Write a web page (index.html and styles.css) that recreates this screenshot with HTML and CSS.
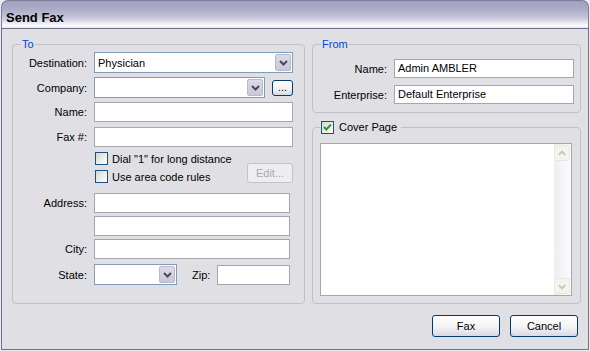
FILE: index.html
```html
<!DOCTYPE html>
<html lang="en">
<head>
    <meta charset="UTF-8">
    <title>Send Fax</title>
    <link rel="stylesheet" href="styles.css">
</head>
<body>
    <div class="window">
        <div class="titlebar">Send Fax</div>
        <div class="client">
            <div class="columns">
                <fieldset class="group group-to">
                    <legend>To</legend>
                    <div class="row row-dest">
                        <span class="label">Destination:</span>
                        <div class="combo combo-dest">
                            <span class="combo-text">Physician</span>
                            <span class="drop"><svg width="9" height="6" viewBox="0 0 9 6"><polyline points="1,1 4.5,4.5 8,1" fill="none" stroke="#4a4a58" stroke-width="2"/></svg></span>
                        </div>
                    </div>
                    <div class="row row-company">
                        <span class="label">Company:</span>
                        <div class="combo combo-company">
                            <span class="combo-text"></span>
                            <span class="drop"><svg width="9" height="6" viewBox="0 0 9 6"><polyline points="1,1 4.5,4.5 8,1" fill="none" stroke="#4a4a58" stroke-width="2"/></svg></span>
                        </div>
                        <span class="btn btn-dots">...</span>
                    </div>
                    <div class="row row-name">
                        <span class="label">Name:</span>
                        <div class="field field-full"></div>
                    </div>
                    <div class="row row-fax">
                        <span class="label">Fax #:</span>
                        <div class="field field-full"></div>
                    </div>
                    <div class="row row-checks">
                        <span class="label"></span>
                        <div class="checks">
                            <div class="check-line"><span class="checkbox"></span>Dial "1" for long distance</div>
                            <div class="check-line"><span class="checkbox"></span>Use area code rules</div>
                        </div>
                        <span class="btn btn-edit">Edit...</span>
                    </div>
                    <div class="row row-address">
                        <span class="label">Address:</span>
                        <div class="field field-addr"></div>
                    </div>
                    <div class="row row-address2">
                        <span class="label"></span>
                        <div class="field field-addr"></div>
                    </div>
                    <div class="row row-city">
                        <span class="label">City:</span>
                        <div class="field field-addr"></div>
                    </div>
                    <div class="row row-state">
                        <span class="label">State:</span>
                        <div class="combo combo-state">
                            <span class="combo-text"></span>
                            <span class="drop"><svg width="9" height="6" viewBox="0 0 9 6"><polyline points="1,1 4.5,4.5 8,1" fill="none" stroke="#4a4a58" stroke-width="2"/></svg></span>
                        </div>
                        <span class="zip-label">Zip:</span>
                        <div class="field field-zip"></div>
                    </div>
                </fieldset>

                <div class="side">
                    <fieldset class="group group-from">
                        <legend>From</legend>
                        <div class="row row-from-name">
                            <span class="label">Name:</span>
                            <div class="field field-from">Admin AMBLER</div>
                        </div>
                        <div class="row row-enterprise">
                            <span class="label">Enterprise:</span>
                            <div class="field field-from">Default Enterprise</div>
                        </div>
                    </fieldset>
                    <fieldset class="group group-cover">
                        <legend><span class="checkbox checked"><svg width="11" height="11" viewBox="0 0 11 11"><polyline points="2,5 4.3,7.5 9,2.5" fill="none" stroke="#21a121" stroke-width="2"/></svg></span>Cover Page</legend>
                        <div class="memo">
                            <div class="memo-text"></div>
                            <div class="scrollbar">
                                <span class="scroll-btn"><svg width="15" height="15" viewBox="0 0 15 15"><polyline points="4,9 7.5,5.5 11,9" fill="none" stroke="#c6c5bb" stroke-width="2"/></svg></span>
                                <span class="scroll-track"></span>
                                <span class="scroll-btn"><svg width="15" height="15" viewBox="0 0 15 15"><polyline points="4,6 7.5,9.5 11,6" fill="none" stroke="#c6c5bb" stroke-width="2"/></svg></span>
                            </div>
                        </div>
                    </fieldset>
                </div>
            </div>

            <div class="actions">
                <span class="btn btn-action">Fax</span>
                <span class="btn btn-action">Cancel</span>
            </div>
        </div>
    </div>
</body>
</html>
```

FILE: styles.css
```css
body {
    margin: 0;
    background: #ecebf0;
    font-family: "Liberation Sans", Arial, sans-serif;
    font-size: 11px;
    color: #000;
}

.window {
    width: 588px;
    height: 350px;
    margin-left: 1px;
    display: flex;
    flex-direction: column;
}

.titlebar {
    box-sizing: border-box;
    height: 28px;
    padding: 5px 0 0 4px;
    line-height: 23px;
    font-size: 13px;
    font-weight: bold;
    color: #000;
    border: 1px solid #7c7b99;
    border-bottom: none;
    border-radius: 7px 7px 0 0;
    background: linear-gradient(to bottom, #a09fbd 0%, #adacc7 30%, #c6c5d9 62%, #eeeef4 84%, #fff 92%, #e4e4ec 100%);
}

.client {
    flex: 1;
    box-sizing: border-box;
    border: 1px solid #706f8d;
    background: #e0dfe3;
    padding: 9px 7px 0 10px;
}

.columns {
    display: flex;
    gap: 7px;
    height: 266px;
}

.group {
    box-sizing: border-box;
    margin: 0;
    min-width: 0;
    border: 1px solid #c1c0c8;
    border-radius: 4px;
}

.group legend {
    padding: 0 1px;
    line-height: 13px;
    color: #0046d5;
}

.group-to {
    width: 293px;
    padding: 1px 11px 0 8px;
}

.side {
    width: 269px;
    display: flex;
    flex-direction: column;
    gap: 8px;
}

.group-from {
    height: 75px;
    padding: 8px 5px 0 8px;
}

.group-cover {
    padding: 9px 7px 7px 7px;
}

.group-cover legend {
    display: flex;
    align-items: center;
    gap: 5px;
    padding: 0 4px 0 1px;
    color: #000;
}

.row {
    display: flex;
    align-items: center;
    gap: 7px;
}

.label {
    width: 66px;
    flex: none;
    text-align: right;
    color: #000;
}

.row-dest { height: 21px; }
.row-company { height: 21px; margin-top: 4px; }
.row-name { height: 20px; margin-top: 4px; }
.row-fax { height: 20px; margin-top: 5px; }
.row-checks { align-items: flex-end; margin-top: 5px; }
.row-address { height: 20px; margin-top: 10px; }
.row-address2 { height: 20px; margin-top: 3px; }
.row-city { height: 20px; margin-top: 3px; }
.row-state { height: 21px; margin-top: 5px; }
.row-from-name { height: 19px; }
.row-enterprise { height: 19px; margin-top: 7px; }

.field {
    box-sizing: border-box;
    height: 100%;
    border: 1px solid #a7a6b0;
    background: #fff;
    padding-left: 3px;
    line-height: 17px;
}

.field-full { width: 199px; }
.field-addr { width: 196px; }
.field-zip { width: 73px; height: 20px; }
.field-from { width: 180px; }

.combo {
    box-sizing: border-box;
    height: 100%;
    display: flex;
    border: 1px solid #7f9db9;
    background: #fff;
    padding: 1px;
}

.combo-dest { width: 199px; }
.combo-company { width: 171px; }
.combo-state { width: 83px; }

.combo-text {
    flex: 1;
    padding-left: 2px;
    display: flex;
    align-items: center;
}

.drop {
    box-sizing: border-box;
    width: 16px;
    display: flex;
    align-items: center;
    justify-content: center;
    border: 1px solid #b9b8cc;
    border-radius: 2px;
    background: linear-gradient(to bottom, #dcdbe7, #c8c7d9);
}

.btn {
    box-sizing: border-box;
    display: flex;
    align-items: center;
    justify-content: center;
    border: 1px solid #003c74;
    border-radius: 3px;
    background: linear-gradient(to bottom, #fff 0%, #f3f3f6 55%, #d9d9e4 100%);
}

.btn-dots {
    width: 21px;
    height: 16px;
    line-height: 10px;
    align-items: flex-end;
    padding-bottom: 3px;
}

.btn-edit {
    width: 46px;
    height: 20px;
    margin-left: auto;
    border-color: #c4c3cc;
    color: #aca9a6;
    background: #eeedf0;
}

.checks {
    display: flex;
    flex-direction: column;
    gap: 5px;
    margin-left: 1px;
}

.check-line {
    display: flex;
    align-items: center;
    gap: 4px;
    height: 13px;
}

.checkbox {
    box-sizing: border-box;
    width: 13px;
    height: 13px;
    flex: none;
    border: 1px solid #1c5180;
    background: linear-gradient(135deg, #d6d5d0 0%, #f4f4f2 70%, #fff 100%);
}

.checkbox.checked {
    display: flex;
}

.zip-label {
    margin-left: 8px;
}

.memo {
    box-sizing: border-box;
    width: 252px;
    height: 153px;
    display: flex;
    border: 1px solid #a7a6b0;
    background: #fff;
}

.memo-text {
    flex: 1;
}

.scrollbar {
    width: 17px;
    display: flex;
    flex-direction: column;
    padding: 1px 1px 1px 0;
    box-sizing: border-box;
    background: linear-gradient(to right, #eeeef3, #fcfcfd);
}

.scroll-btn {
    box-sizing: border-box;
    height: 16px;
    border: 1px solid #e9e8df;
    border-radius: 2px;
    background: #f5f4ef;
    display: flex;
}

.scroll-track {
    flex: 1;
}

.actions {
    display: flex;
    justify-content: flex-end;
    gap: 10px;
    margin: 11px 3px 0 0;
}

.btn-action {
    width: 68px;
    height: 22px;
}
```
